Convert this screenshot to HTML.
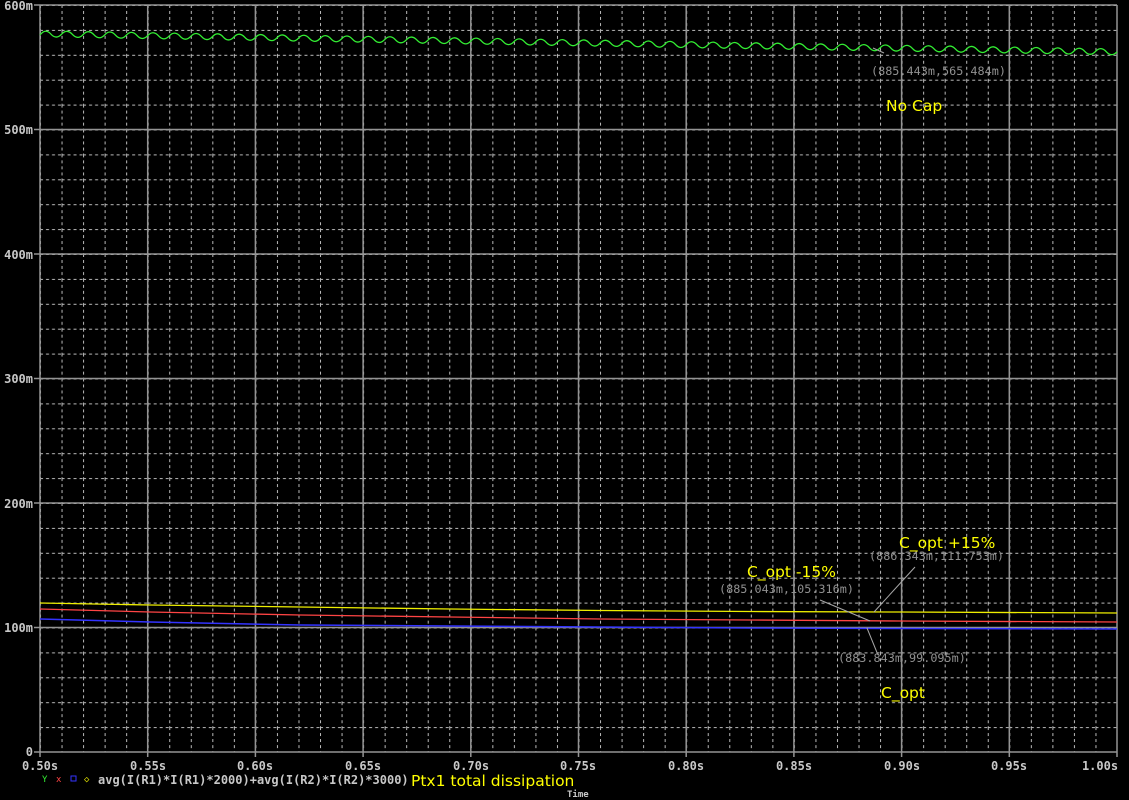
<!DOCTYPE html>
<html><head><meta charset="utf-8"><style>
html,body{margin:0;padding:0;background:#000;width:1129px;height:800px;overflow:hidden}
svg{display:block}
.ax{font-family:"DejaVu Sans Mono","Liberation Mono",monospace;font-size:12px;font-weight:bold;fill:#c8c8c8}
.an{font-family:"DejaVu Sans Mono","Liberation Mono",monospace;font-size:11.8px;fill:#909090}
.yl{font-family:"DejaVu Sans","Liberation Sans",sans-serif;font-size:15.5px;fill:#ffff00}
</style></head><body>
<svg width="1129" height="800" viewBox="0 0 1129 800">
<defs>
<pattern id="g" x="40" y="5" width="21.54" height="24.9" patternUnits="userSpaceOnUse">
<line x1="0.5" y1="0" x2="0.5" y2="24.9" stroke="#bbbbbb" stroke-width="1" stroke-dasharray="3,3"/>
<line x1="0" y1="0.5" x2="21.54" y2="0.5" stroke="#bbbbbb" stroke-width="1" stroke-dasharray="3,3"/>
</pattern>
</defs>
<rect x="40" y="5" width="1077" height="747" fill="url(#g)"/>
<g stroke="#949494" stroke-width="1.5">
<line x1="40" y1="5" x2="1117" y2="5"/>
<line x1="40" y1="129.5" x2="1117" y2="129.5"/>
<line x1="40" y1="254" x2="1117" y2="254"/>
<line x1="40" y1="378.5" x2="1117" y2="378.5"/>
<line x1="40" y1="503" x2="1117" y2="503"/>
<line x1="40" y1="627.5" x2="1117" y2="627.5"/>
<line x1="34" y1="752" x2="1117" y2="752"/>
<line x1="34" y1="5" x2="40" y2="5"/><line x1="34" y1="129.5" x2="40" y2="129.5"/><line x1="34" y1="254" x2="40" y2="254"/><line x1="34" y1="378.5" x2="40" y2="378.5"/><line x1="34" y1="503" x2="40" y2="503"/><line x1="34" y1="627.5" x2="40" y2="627.5"/>
<line x1="40" y1="5" x2="40" y2="757"/>
<line x1="147.7" y1="5" x2="147.7" y2="757"/>
<line x1="255.4" y1="5" x2="255.4" y2="757"/>
<line x1="363.1" y1="5" x2="363.1" y2="757"/>
<line x1="470.8" y1="5" x2="470.8" y2="757"/>
<line x1="578.5" y1="5" x2="578.5" y2="757"/>
<line x1="686.2" y1="5" x2="686.2" y2="757"/>
<line x1="793.9" y1="5" x2="793.9" y2="757"/>
<line x1="901.6" y1="5" x2="901.6" y2="757"/>
<line x1="1009.3" y1="5" x2="1009.3" y2="757"/>
<line x1="1117" y1="5" x2="1117" y2="757"/>
</g>
<g class="ax" text-anchor="end">
<text x="33" y="10">600m</text><text x="33" y="134">500m</text><text x="33" y="259">400m</text><text x="33" y="383">300m</text><text x="33" y="508">200m</text><text x="33" y="632">100m</text><text x="33" y="756">0</text>
</g>
<g class="ax" text-anchor="middle">
<text x="40" y="770">0.50s</text><text x="148" y="770">0.55s</text><text x="255" y="770">0.60s</text><text x="363" y="770">0.65s</text><text x="471" y="770">0.70s</text><text x="578" y="770">0.75s</text><text x="686" y="770">0.80s</text><text x="794" y="770">0.85s</text><text x="902" y="770">0.90s</text><text x="1009" y="770">0.95s</text><text x="1100" y="770">1.00s</text>
</g>
<path d="M40,35 q5.4,-7 10.8,-1 t10.77,0.18 t10.77,0.18 t10.77,0.18 t10.77,0.18 t10.77,0.18 t10.77,0.18 t10.77,0.18 t10.77,0.18 t10.77,0.18 t10.77,0.18 t10.77,0.18 t10.77,0.18 t10.77,0.18 t10.77,0.18 t10.77,0.18 t10.77,0.18 t10.77,0.18 t10.77,0.18 t10.77,0.18 t10.77,0.18 t10.77,0.18 t10.77,0.18 t10.77,0.18 t10.77,0.18 t10.77,0.18 t10.77,0.18 t10.77,0.18 t10.77,0.18 t10.77,0.18 t10.77,0.18 t10.77,0.18 t10.77,0.18 t10.77,0.18 t10.77,0.18 t10.77,0.18 t10.77,0.18 t10.77,0.18 t10.77,0.18 t10.77,0.18 t10.77,0.18 t10.77,0.18 t10.77,0.18 t10.77,0.18 t10.77,0.18 t10.77,0.18 t10.77,0.18 t10.77,0.18 t10.77,0.18 t10.77,0.18 t10.77,0.18 t10.77,0.18 t10.77,0.18 t10.77,0.18 t10.77,0.18 t10.77,0.18 t10.77,0.18 t10.77,0.18 t10.77,0.18 t10.77,0.18 t10.77,0.18 t10.77,0.18 t10.77,0.18 t10.77,0.18 t10.77,0.18 t10.77,0.18 t10.77,0.18 t10.77,0.18 t10.77,0.18 t10.77,0.18 t10.77,0.18 t10.77,0.18 t10.77,0.18 t10.77,0.18 t10.77,0.18 t10.77,0.18 t10.77,0.18 t10.77,0.18 t10.77,0.18 t10.77,0.18 t10.77,0.18 t10.77,0.18 t10.77,0.18 t10.77,0.18 t10.77,0.18 t10.77,0.18 t10.77,0.18 t10.77,0.18 t10.77,0.18 t10.77,0.18 t10.77,0.18 t10.77,0.18 t10.77,0.18 t10.77,0.18 t10.77,0.18 t10.77,0.18 t10.77,0.18 t10.77,0.18 t10.77,0.18 t10.77,0.18" fill="none" stroke="#33ee33" stroke-width="1.3"/>
<polyline points="40,603 150,605 300,607 450,609 600,610.5 750,611.5 900,612 1117,613" fill="none" stroke="#eeee00" stroke-width="1.3"/>
<polyline points="40,609 150,612 300,615 450,617 600,619 750,620 900,621 1117,622" fill="none" stroke="#ff4444" stroke-width="1.3"/>
<polyline points="40,619 150,622 300,625 450,626 600,627 750,628 900,628.5 1117,629" fill="none" stroke="#3333ff" stroke-width="1.5"/>
<g stroke="#a8a8a8" stroke-width="1">
<line x1="915" y1="567" x2="874" y2="612"/>
<line x1="820" y1="600" x2="870" y2="621"/>
<line x1="867" y1="628" x2="878" y2="655"/>
<line x1="873" y1="48" x2="884" y2="53"/>
</g>
<g class="an">
<text x="871" y="75">(885.443m,565.484m)</text>
<text x="869" y="560">(886.343m,111.753m)</text>
<text x="719" y="593">(885.043m,105.316m)</text>
<text x="838" y="662">(883.843m,99.095m)</text>
</g>
<g class="yl">
<text x="886" y="111">No Cap</text>
<text x="899" y="548">C_opt +15%</text>
<text x="747" y="577">C_opt -15%</text>
<text x="881" y="698">C_opt</text>
</g>
<g font-family="DejaVu Sans Mono,Liberation Mono,monospace" font-size="9">
<text x="42" y="782" fill="#33ee33">Y</text>
<text x="56" y="782" fill="#ff4444">x</text>
<rect x="71" y="776" width="5" height="5" fill="none" stroke="#3333ff"/>
<text x="84" y="782" fill="#eeee00">◇</text>
</g>
<text x="98" y="784" class="ax">avg(I(R1)*I(R1)*2000)+avg(I(R2)*I(R2)*3000)</text>
<text x="411" y="786" class="yl">Ptx1 total dissipation</text>
<text x="567" y="797" font-family="DejaVu Sans Mono,monospace" font-size="9" font-weight="bold" fill="#c8c8c8">Time</text>
</svg>
</body></html>
